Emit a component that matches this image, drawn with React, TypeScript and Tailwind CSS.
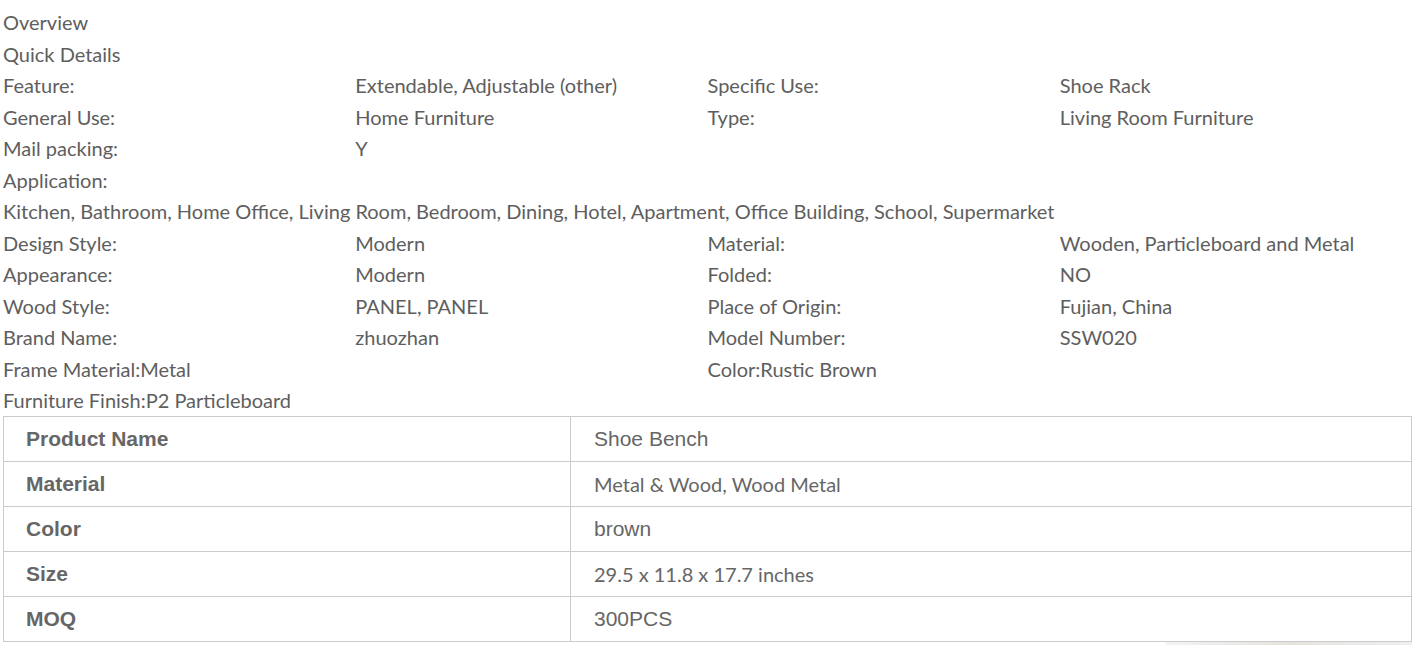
import React from 'react';

const sans = "font-['Lato','Noto_Sans',sans-serif]";
const arial = "font-['Liberation_Sans',Arial,sans-serif]";

const quad: [string, string, string, string][] = [
  ['Feature:', 'Extendable, Adjustable (other)', 'Specific Use:', 'Shoe Rack'],
  ['General Use:', 'Home Furniture', 'Type:', 'Living Room Furniture'],
  ['Mail packing:', 'Y', '', ''],
];

const quad2: [string, string, string, string][] = [
  ['Design Style:', 'Modern', 'Material:', 'Wooden, Particleboard and Metal'],
  ['Appearance:', 'Modern', 'Folded:', 'NO'],
  ['Wood Style:', 'PANEL, PANEL', 'Place of Origin:', 'Fujian, China'],
  ['Brand Name:', 'zhuozhan', 'Model Number:', 'SSW020'],
];

const specs = [
  { label: 'Product Name', value: 'Shoe Bench', arial: true },
  { label: 'Material', value: 'Metal & Wood, Wood Metal', arial: false },
  { label: 'Color', value: 'brown', arial: true },
  { label: 'Size', value: '29.5 x 11.8 x 17.7 inches', arial: false },
  { label: 'MOQ', value: '300PCS', arial: true },
];

const Row = ({ cells }: { cells: string[] }) => (
  <div className="grid grid-cols-4">
    {cells.map((c, i) => (
      <div key={i} className="whitespace-nowrap">{c}</div>
    ))}
  </div>
);

export default function App() {
  return (
    <div className="bg-white min-h-screen pt-[7px] pl-[3px] pr-[7px] text-[#5e5e5e]">
      <div className={`${sans} text-[20px] leading-[31.5px]`}>
        <div>Overview</div>
        <div>Quick Details</div>
        {quad.map((r, i) => <Row key={i} cells={r} />)}
        <div>Application:</div>
        <div className="whitespace-nowrap">
          Kitchen, Bathroom, Home Office, Living Room, Bedroom, Dining, Hotel, Apartment, Office Building, School, Supermarket
        </div>
        {quad2.map((r, i) => <Row key={i} cells={r} />)}
        <div className="grid grid-cols-4">
          <div className="col-span-2">Frame Material:Metal</div>
          <div className="col-span-2">Color:Rustic Brown</div>
        </div>
        <div className="h-[30.5px]">Furniture Finish:P2 Particleboard</div>
      </div>

      <div className="border border-[#cccccc] w-[1409px]">
        {specs.map((s, i) => (
          <div
            key={s.label}
            className={`grid grid-cols-[567px_1fr] ${i < specs.length - 1 ? 'h-[45px] border-b border-[#cccccc]' : 'h-[44px]'}`}
          >
            <div className={`flex items-center pl-[22px] border-r border-[#cccccc] ${arial} font-bold text-[21px] text-[#666666]`}>
              {s.label}
            </div>
            <div
              className={`flex items-center pl-[23px] text-[#666666] ${
                s.arial ? `${arial} text-[21px]` : `${sans} text-[20px]`
              }`}
            >
              {s.value}
            </div>
          </div>
        ))}
      </div>
      <div className="flex justify-end w-[1409px]">
        <div className="w-[246px] h-[4px] bg-gradient-to-r from-[#f3f3f3] via-[#e6e2de] to-[#efefef]" />
      </div>
    </div>
  );
}
